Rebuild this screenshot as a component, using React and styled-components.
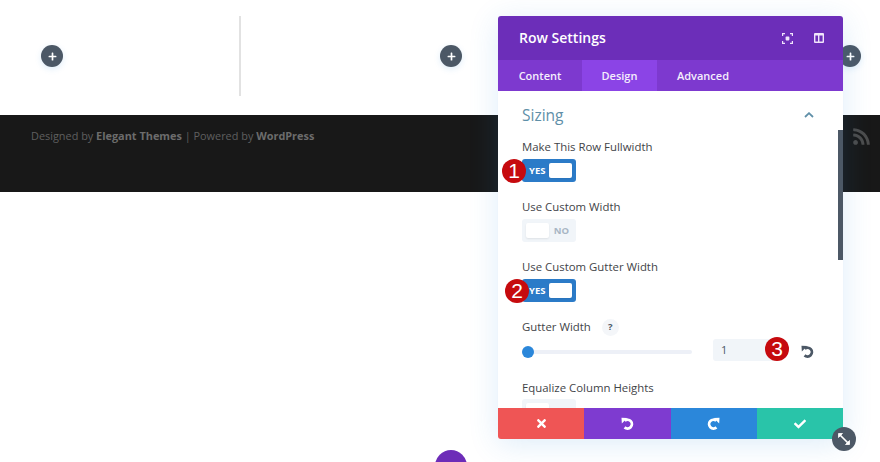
import React from 'react'
import styled, { createGlobalStyle } from 'styled-components'
import { FaRss, FaTimes, FaCheck, FaPlus } from 'react-icons/fa'

const Global = createGlobalStyle`
  html, body { margin: 0; padding: 0; background: #fff; }
  body { font-family: "Open Sans", "Liberation Sans", sans-serif; }
`

const Page = styled.div`
  position: relative;
  width: 880px;
  height: 462px;
  overflow: hidden;
  background: #fff;
`

const TopRow = styled.div`
  display: flex;
  height: 115px;
  box-sizing: border-box;
  padding: 16px 0 19px 41px;
`

const Column = styled.div`
  display: flex;
  align-items: center;
  width: 399px;
  flex: none;
`

const Divider = styled.div`
  width: 2px;
  height: 80px;
  margin-left: 176px;
  background: #e2e2e2;
`

const PlusButton = styled.div`
  width: 22px;
  height: 22px;
  flex: none;
  border-radius: 50%;
  background: #4c5866;
  color: #fff;
  display: flex;
  align-items: center;
  justify-content: center;
  font-size: 9px;
  box-shadow: 0 2px 6px rgba(43, 135, 218, 0.15);
`

const Footer = styled.footer`
  height: 77px;
  box-sizing: border-box;
  padding: 12px 9px 0 31px;
  background: #181818;
  display: flex;
  justify-content: space-between;
  align-items: flex-start;
  color: #5f5f5f;
  font-size: 10.9px;
  line-height: 17px;
  b { font-weight: 700; color: #6c6c6c; }
`

const RssIcon = styled(FaRss)`
  width: 19px;
  height: 19px;
  color: #4c4c4c;
`

const BottomDot = styled.div`
  position: absolute;
  left: 435px;
  top: 450px;
  width: 32px;
  height: 32px;
  border-radius: 50%;
  background: #6d2cb8;
`

const Panel = styled.section`
  position: absolute;
  left: 498px;
  top: 16px;
  width: 345px;
  height: 423px;
  display: flex;
  flex-direction: column;
  background: #fff;
  border-radius: 3px;
  box-shadow: 0 5px 30px rgba(43, 135, 218, 0.16);
`

const Header = styled.header`
  height: 44px;
  flex: none;
  display: flex;
  align-items: center;
  justify-content: space-between;
  padding: 0 19px 0 21px;
  background: #6c2eb9;
  border-radius: 3px 3px 0 0;
  color: #fff;
`

const Title = styled.h1`
  margin: 0 0 1px;
  font-size: 14px;
  font-weight: 600;
  line-height: 20px;
`

const HeaderIcons = styled.div`
  display: flex;
  align-items: center;
  gap: 21px;
  color: #f0e4fb;
`

const Tabs = styled.nav`
  height: 31px;
  flex: none;
  display: flex;
  background: #7d39cf;
`

const Tab = styled.div`
  width: ${p => p.$w}px;
  display: flex;
  align-items: center;
  justify-content: center;
  font-size: 11px;
  font-weight: 600;
  color: #f5eefc;
  background: ${p => (p.$active ? '#8b44e6' : 'transparent')};
`

const Body = styled.div`
  position: relative;
  flex: 1;
  min-height: 0;
  overflow: hidden;
  padding: 14px 0 0 24px;
`

const ScrollThumb = styled.div`
  position: absolute;
  right: 0;
  top: 39px;
  width: 5px;
  height: 130px;
  background: #4c5866;
`

const SectionHead = styled.div`
  display: flex;
  justify-content: space-between;
  align-items: center;
  height: 20px;
  padding-right: 29px;
  margin-bottom: 13px;
`

const SectionTitle = styled.h2`
  margin: 0;
  font-size: 15.5px;
  font-weight: 400;
  line-height: 20px;
  color: #5f8fa8;
`

const Option = styled.div`
  height: 60px;
`

const Label = styled.div`
  display: flex;
  align-items: center;
  gap: 11px;
  height: 18px;
  margin-bottom: ${p => (p.$tight ? 2 : 3)}px;
  font-size: 11.4px;
  line-height: 18px;
  font-weight: 500;
  color: #3f4448;
`

const ToggleWrap = styled.div`
  position: relative;
  width: 54px;
`

const Toggle = styled.div`
  width: 54px;
  height: 23px;
  box-sizing: border-box;
  padding: 0 4px 0 ${p => (p.$on ? 7 : 4)}px;
  border-radius: 3px;
  display: flex;
  align-items: center;
  justify-content: space-between;
  flex-direction: ${p => (p.$on ? 'row' : 'row-reverse')};
  background: ${p => (p.$on ? '#2b7bc8' : '#f1f5f9')};
  color: ${p => (p.$on ? '#fff' : '#a8b5c4')};
  font-size: 9.5px;
  font-weight: 700;
`

const ToggleText = styled.span`
  margin-right: ${p => (p.$off ? 3 : 0)}px;
`

const Thumb = styled.span`
  width: 23px;
  height: 15px;
  border-radius: 2px;
  background: #fff;
  box-shadow: 0 1px 2px rgba(0, 0, 0, 0.08);
`

const Badge = styled.div`
  position: absolute;
  left: ${p => p.$left}px;
  top: ${p => p.$top}px;
  width: 24px;
  height: 24px;
  border-radius: 50%;
  background: #c60a0e;
  color: #fff;
  display: flex;
  align-items: center;
  justify-content: center;
  font-family: "Liberation Sans", Arial, sans-serif;
  font-size: 21px;
  line-height: 24px;
`

const Help = styled.span`
  width: 17px;
  height: 17px;
  border-radius: 50%;
  background: #f4f6f9;
  color: #4c5866;
  display: flex;
  align-items: center;
  justify-content: center;
  font-size: 9.5px;
  font-weight: 700;
`

const SliderRow = styled.div`
  display: flex;
  align-items: center;
  height: 22px;
  margin-top: 2px;
  margin-bottom: 18px;
`

const Track = styled.div`
  position: relative;
  width: 170px;
  height: 4px;
  margin-top: 3px;
  border-radius: 2px;
  background: #edf0f7;
`

const Knob = styled.span`
  position: absolute;
  left: 0;
  top: -4px;
  width: 12px;
  height: 12px;
  border-radius: 50%;
  background: #2b87da;
`

const NumberBox = styled.div`
  position: relative;
  width: 65px;
  height: 22px;
  margin-left: 21px;
  box-sizing: border-box;
  padding-left: 8px;
  background: #f1f5f9;
  border-radius: 3px;
  font-size: 11px;
  line-height: 22px;
  color: #4c5866;
`

const ResetIcon = styled.span`
  display: flex;
  margin-top: 2px;
  margin-left: 23px;
  color: #4c5866;
`

const ActionBar = styled.div`
  display: grid;
  grid-template-columns: repeat(4, 1fr);
  height: 31px;
  flex: none;
  border-radius: 0 0 3px 3px;
  overflow: hidden;
`

const Action = styled.button`
  border: 0;
  padding: 0;
  display: flex;
  align-items: center;
  justify-content: center;
  color: #fff;
  background: ${p => p.$bg};
`

const ExpandHandle = styled.div`
  position: absolute;
  left: 832px;
  top: 427px;
  width: 24px;
  height: 24px;
  border-radius: 50%;
  background: #4c5866;
  display: flex;
  align-items: center;
  justify-content: center;
`

const Undo = ({ size = 13 }) => (
  <svg width={size} height={size} viewBox="0 0 16 16" fill="none">
    <path d="M4.6 4.6A5.4 5.4 0 1 1 4.4 12.8" stroke="currentColor" strokeWidth="3.4" />
    <path d="M0.6 0.8 L7.8 1.2 L1 8 Z" fill="currentColor" />
  </svg>
)

const Redo = ({ size = 13 }) => (
  <svg width={size} height={size} viewBox="0 0 16 16" fill="none">
    <path d="M11.4 4.6A5.4 5.4 0 1 0 11.6 12.8" stroke="currentColor" strokeWidth="3.4" />
    <path d="M15.4 0.8 L8.2 1.2 L15 8 Z" fill="currentColor" />
  </svg>
)

const FocusIcon = () => (
  <svg width="11" height="11" viewBox="0 0 11 11" fill="none" stroke="currentColor" strokeWidth="1.2">
    <path d="M0.6 3V0.6H3M8 0.6H10.4V3M10.4 8V10.4H8M3 10.4H0.6V8" />
    <rect x="3.6" y="3.6" width="3.8" height="3.8" rx="0.8" fill="currentColor" stroke="none" />
  </svg>
)

const SplitIcon = () => (
  <svg width="10" height="10" viewBox="0 0 10 10">
    <path fill="currentColor" fillRule="evenodd" d="M1 0H9A1 1 0 0 1 10 1V9A1 1 0 0 1 9 10H1A1 1 0 0 1 0 9V1A1 1 0 0 1 1 0ZM1.4 2.4V8.6H4V2.4ZM5.4 2.4V8.6H8.6V2.4Z" />
  </svg>
)

const Chevron = () => (
  <svg width="10" height="6" viewBox="0 0 10 6" fill="none" stroke="#5f8fa8" strokeWidth="1.8">
    <path d="M1 5L5 1.2L9 5" />
  </svg>
)

const Expand = () => (
  <svg width="14" height="14" viewBox="0 0 14 14" fill="none" stroke="#fff" strokeWidth="1.7">
    <path d="M3 3L11 11" />
    <path d="M1.5 5.5V1.5H5.5Z" fill="#fff" strokeWidth="0.8" />
    <path d="M12.5 8.5V12.5H8.5Z" fill="#fff" strokeWidth="0.8" />
  </svg>
)

const SwitchField = ({ label, on, badge }) => (
  <Option>
    <Label>{label}</Label>
    <ToggleWrap>
      <Toggle $on={on}>
        <ToggleText $off={!on}>{on ? 'YES' : 'NO'}</ToggleText>
        <Thumb />
      </Toggle>
      {badge && <Badge $left={badge.left} $top={badge.top}>{badge.n}</Badge>}
    </ToggleWrap>
  </Option>
)

export default function App() {
  return (
    <Page>
      <Global />
      <TopRow>
        <Column>
          <PlusButton><FaPlus /></PlusButton>
          <Divider />
        </Column>
        <Column>
          <PlusButton><FaPlus /></PlusButton>
        </Column>
        <Column>
          <PlusButton><FaPlus /></PlusButton>
        </Column>
      </TopRow>
      <Footer>
        <span>Designed by <b>Elegant Themes</b> | Powered by <b>WordPress</b></span>
        <RssIcon />
      </Footer>
      <BottomDot />
      <Panel>
        <Header>
          <Title>Row Settings</Title>
          <HeaderIcons>
            <FocusIcon />
            <SplitIcon />
          </HeaderIcons>
        </Header>
        <Tabs>
          <Tab $w={84}>Content</Tab>
          <Tab $w={75} $active>Design</Tab>
          <Tab $w={92}>Advanced</Tab>
        </Tabs>
        <Body>
          <ScrollThumb />
          <SectionHead>
            <SectionTitle>Sizing</SectionTitle>
            <Chevron />
          </SectionHead>
          <SwitchField label="Make This Row Fullwidth" on badge={{ n: 1, left: -20, top: 0 }} />
          <SwitchField label="Use Custom Width" />
          <SwitchField label="Use Custom Gutter Width" on badge={{ n: 2, left: -17, top: 0 }} />
          <Label>Gutter Width <Help>?</Help></Label>
          <SliderRow>
            <Track><Knob /></Track>
            <NumberBox>
              1
              <Badge $left={52} $top={-2}>3</Badge>
            </NumberBox>
            <ResetIcon><Undo /></ResetIcon>
          </SliderRow>
          <Label $tight>Equalize Column Heights</Label>
          <ToggleWrap>
            <Toggle>
              <ToggleText $off />
              <Thumb />
            </Toggle>
          </ToggleWrap>
        </Body>
        <ActionBar>
          <Action $bg="#ef5555"><FaTimes size={13} /></Action>
          <Action $bg="#7e3bd0"><Undo /></Action>
          <Action $bg="#2b87da"><Redo /></Action>
          <Action $bg="#29c4a9"><FaCheck size={12} /></Action>
        </ActionBar>
      </Panel>
      <ExpandHandle><Expand /></ExpandHandle>
    </Page>
  )
}
